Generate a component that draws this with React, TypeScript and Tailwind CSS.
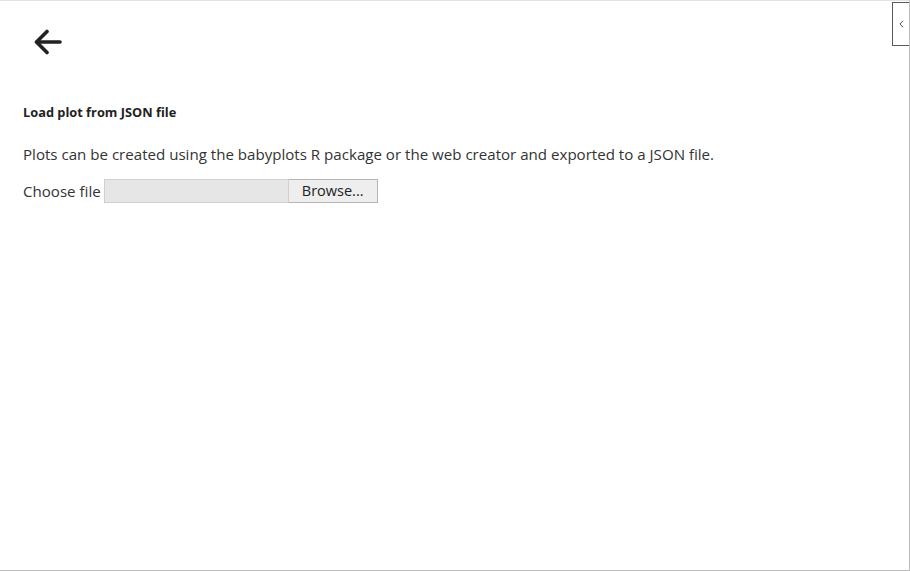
import { useState } from 'react';

export default function App() {
  const [fileName, setFileName] = useState('');

  return (
    <div
      className="relative h-[571px] w-[910px] overflow-hidden border-t border-r border-b border-t-[#e3e3e3] border-r-[#bdbdbd] border-b-[#bdbdbd] bg-white text-[#212529]"
      style={{ fontFamily: '"Segoe UI", "Open Sans", sans-serif' }}
    >
      {/* Sidebar toggle */}
      <button
        className="absolute top-[1px] right-0 flex h-[44px] w-[17px] items-center justify-center border border-r-0 border-[#5a5a5a] bg-white"
        aria-label="Open sidebar"
      >
        <svg viewBox="0 0 6 10" className="h-[8px] w-[5px]" fill="none" stroke="#444" strokeWidth="1.2">
          <path d="M5 1 L1 5 L5 9" />
        </svg>
      </button>

      <div className="px-[23px] pt-[27px]">
        {/* Back arrow */}
        <button className="ml-[11px] flex h-[28px] w-[30px] items-center" aria-label="Back">
          <svg viewBox="0 0 28 26" className="h-[26px] w-[28px]" fill="none" stroke="#222" strokeWidth="3.6" strokeLinecap="round" strokeLinejoin="round">
            <path d="M26 13 H3" />
            <path d="M13 2.5 L2.5 13 L13 23.5" />
          </svg>
        </button>

        <h2 className="mt-[48px] text-[12.8px] font-bold leading-[16px] text-[#222]">Load plot from JSON file</h2>

        <p className="mt-[23px] text-[15.1px] leading-[22px] text-[#333]">
          Plots can be created using the babyplots R package or the web creator and exported to a JSON file.
        </p>

        <label className="mt-[14px] flex items-center text-[15.1px] text-[#333]">
          <span className="mr-[3px]">Choose file</span>
          <span className="flex h-[24px]">
            <span className="block w-[185px] border border-[#cfcfcf] bg-[#e6e6e6] px-1 text-[14px] leading-[22px]">
              {fileName}
            </span>
            <span className="flex w-[89px] items-center justify-center border border-l-0 border-[#b5b5b5] bg-[#eeeeee] text-[14.5px] text-[#222]">
              Browse...
            </span>
          </span>
          <input
            type="file"
            accept=".json"
            className="hidden"
            onChange={(e) => setFileName(e.target.files?.[0]?.name ?? '')}
          />
        </label>
      </div>
    </div>
  );
}
